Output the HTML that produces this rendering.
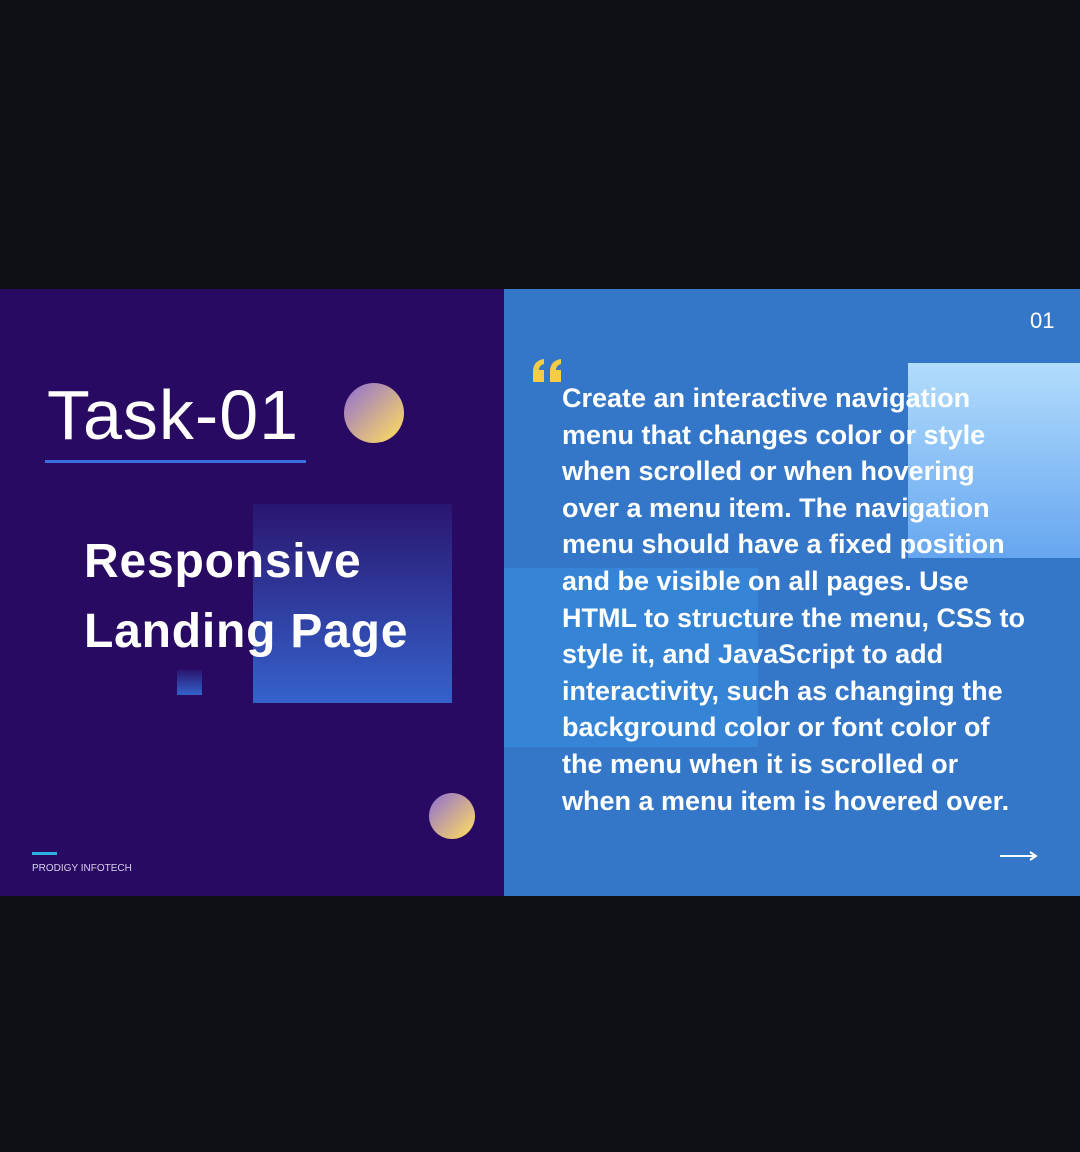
<!DOCTYPE html>
<html><head><meta charset="utf-8"><style>
*{margin:0;padding:0;box-sizing:border-box}
body{width:1080px;height:1152px;background:#0d1115;position:relative;overflow:hidden;font-family:"Liberation Sans",sans-serif}
.a{position:absolute}
.left{left:0;top:289px;width:504px;height:607px;background:#290a63}
.right{left:504px;top:289px;width:576px;height:607px;background:#3477c8}
.circ{border-radius:50%;background:linear-gradient(135deg,#9a78c8 10%,#f2d06c 85%)}
.t{color:#fff;font-weight:bold;font-size:27px;white-space:nowrap;left:562px;line-height:36.6px;letter-spacing:0}
</style></head><body>
<div class="a left"></div>
<div class="a" style="left:253px;top:504px;width:199px;height:199px;background:linear-gradient(180deg,#2a1670,#3562cc)"></div>
<div class="a" style="left:177px;top:670px;width:25px;height:25px;background:linear-gradient(180deg,#2a1670,#3562cc)"></div>
<div class="a" style="left:47px;top:372px;color:#fff;font-size:70px;line-height:86px;font-weight:300;letter-spacing:1px">Task-01</div>
<div class="a" style="left:45px;top:460px;width:261px;height:3px;background:#3b6ee0"></div>
<div class="a circ" style="left:344px;top:383px;width:60px;height:60px"></div>
<div class="a circ" style="left:429px;top:793px;width:46px;height:46px"></div>
<div class="a" style="left:84px;top:527px;color:#fff;font-weight:bold;font-size:48px;line-height:70px;letter-spacing:0.8px">Responsive<br>Landing Page</div>
<div class="a" style="left:32px;top:852px;width:25px;height:3px;background:#2bb0e0"></div>
<div class="a" style="left:32px;top:863px;color:#d8d0ee;font-size:10px">PRODIGY INFOTECH</div>

<div class="a right"></div>
<div class="a" style="left:908px;top:363px;width:172px;height:195px;background:linear-gradient(180deg,#b2dcfc,#66a6f0)"></div>
<div class="a" style="left:504px;top:568px;width:254px;height:179px;background:#3584d6"></div>
<div class="a" style="left:1030px;top:308px;color:#fff;font-size:22px">01</div>
<svg class="a" style="left:531px;top:358px" width="32" height="26"><path d="M2 24V14C2 6 6 2 13 1V6C9 7 8 10 8 12H13V24ZM19 24V14C19 6 23 2 30 1V6C26 7 25 10 25 12H30V24Z" fill="#f5cc45"/></svg>
<div class="a t" style="top:380px">Create an interactive navigation<br>menu that changes color or style<br>when scrolled or when hovering<br>over a menu item. The navigation<br>menu should have a fixed position<br>and be visible on all pages. Use<br>HTML to structure the menu, CSS to<br>style it, and JavaScript to add<br>interactivity, such as changing the<br>background color or font color of<br>the menu when it is scrolled or<br>when a menu item is hovered over.</div>
<svg class="a" style="left:1000px;top:850px" width="38" height="12"><path d="M0 6H35M30 2L36 6L30 10" stroke="#fff" stroke-width="2" fill="none"/></svg>
</body></html>
